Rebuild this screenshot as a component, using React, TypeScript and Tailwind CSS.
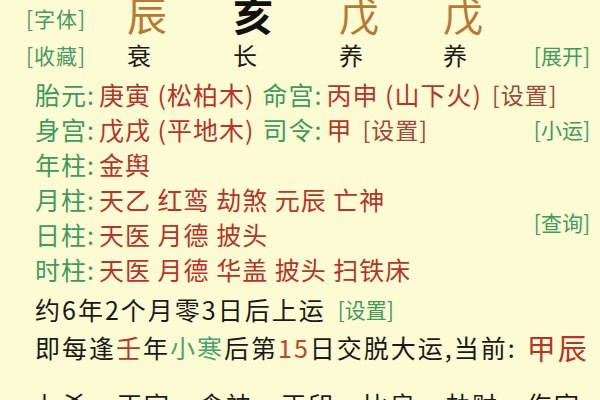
const GREEN = "text-[#3f9a5e]";
const RED = "text-[#b5352b]";

const pillars = [
  { top: "辰", sub: "衰", dark: false, w: "w-[106px]" },
  { top: "亥", sub: "长", dark: true, w: "w-[106px]" },
  { top: "戊", sub: "养", dark: false, w: "w-[104px]" },
  { top: "戊", sub: "养", dark: false, w: "w-[70px]" },
];

const shensha = [
  { label: "年柱:", items: "金舆" },
];

const tenGods = ["七杀", "正官", "食神", "正印", "比肩", "劫财", "伤官"];

function LabelRow({ label, children }: { label: string; children: React.ReactNode }) {
  return (
    <div className="flex h-[35px] items-center pl-[35px] pr-[10px] text-[25px] tracking-[1px] whitespace-nowrap">
      <span className={GREEN}>{label}</span>
      <span className={`${RED} ml-[4px]`}>{children}</span>
    </div>
  );
}

export default function App() {
  return (
    <div className="w-[600px] h-[400px] overflow-hidden bg-[#fcfbd3] font-['Noto_Sans_CJK_SC',sans-serif] leading-none">
      {/* pillars */}
      <div className="flex h-[36px] items-center">
        <div className="w-[127px] shrink-0 pl-[26px] text-[21px] text-[#4a9a66] tracking-[1px]">[字体]</div>
        {pillars.map((p, i) => (
          <div key={i} className={`${p.w} shrink-0 h-[36px] overflow-visible`}>
            <div className={`-mt-[4px] text-[40px] leading-[36px] ${p.dark ? "text-[#111] font-bold" : "text-[#b87a32]"}`}>{p.top}</div>
          </div>
        ))}
      </div>
      <div className="flex h-[38px] items-center pr-[10px]">
        <div className="w-[127px] shrink-0 pl-[26px] text-[21px] text-[#4a9a66] tracking-[1px]">[收藏]</div>
        {pillars.map((p, i) => (
          <div key={i} className={`${p.w} shrink-0 text-[24px] text-[#1a1a1a]`}>{p.sub}</div>
        ))}
        <div className={`ml-auto shrink-0 whitespace-nowrap ${GREEN} text-[21px]`}>[展开]</div>
      </div>

      {/* info rows */}
      <div className="mt-[3px]">
        <div className="flex h-[35px] items-center pl-[35px] pr-[10px] text-[25px] tracking-[1px] whitespace-nowrap">
          <span className={GREEN}>胎元:</span>
          <span className={`${RED} ml-[4px]`}>庚寅 (松柏木)</span>
          <span className={`${GREEN} ml-[8px]`}>命宫:</span>
          <span className={`${RED} ml-[4px]`}>丙申 (山下火)</span>
          <span className="ml-[10px] text-[#a2483a] text-[23px]">[设置]</span>
        </div>
        <div className="flex h-[35px] items-center pl-[35px] pr-[10px] text-[25px] tracking-[1px] whitespace-nowrap">
          <span className={GREEN}>身宫:</span>
          <span className={`${RED} ml-[4px]`}>戊戌 (平地木)</span>
          <span className={`${GREEN} ml-[8px]`}>司令:</span>
          <span className={`${RED} ml-[4px]`}>甲</span>
          <span className="ml-[10px] text-[#a2483a] text-[23px]">[设置]</span>
          <span className={`ml-auto ${GREEN} text-[21px] tracking-normal`}>[小运]</span>
        </div>
        {shensha.map((s) => (
          <LabelRow key={s.label} label={s.label}>{s.items}</LabelRow>
        ))}
        <div className="flex">
          <div className="flex-1">
            <LabelRow label="月柱:">天乙 红鸾 劫煞 元辰 亡神</LabelRow>
            <LabelRow label="日柱:">天医 月德 披头</LabelRow>
          </div>
          <div className={`self-center pt-[10px] pr-[10px] ${GREEN} text-[21px]`}>[查询]</div>
        </div>
        <LabelRow label="时柱:">天医 月德 华盖 披头 扫铁床</LabelRow>
      </div>

      {/* luck */}
      <div className="flex h-[40px] items-center pl-[35px] pt-[4px] text-[25px] tracking-[2px] text-[#1a1a1a] whitespace-nowrap">
        约6年2个月零3日后上运
        <span className={`ml-[12px] ${GREEN} text-[21px] tracking-normal`}>[设置]</span>
      </div>
      <div className="flex h-[40px] items-center pl-[35px] text-[25px] tracking-[2px] text-[#1a1a1a] whitespace-nowrap">
        即每逢<span className={RED}>壬</span>年<span className="text-[#4aa56c]">小寒</span>后第<span className="text-[#c0452c]">15</span>日交脱大运,当前:
        <span className={`${RED} ml-[10px] text-[29px]`}>甲辰</span>
      </div>
      <div className="flex h-[40px] items-center gap-[28px] pl-[35px] pt-[34px] text-[25px] tracking-[2px] text-[#1a1a1a] whitespace-nowrap">
        {tenGods.map((g, i) => (
          <span key={i}>{g}</span>
        ))}
      </div>
    </div>
  );
}
